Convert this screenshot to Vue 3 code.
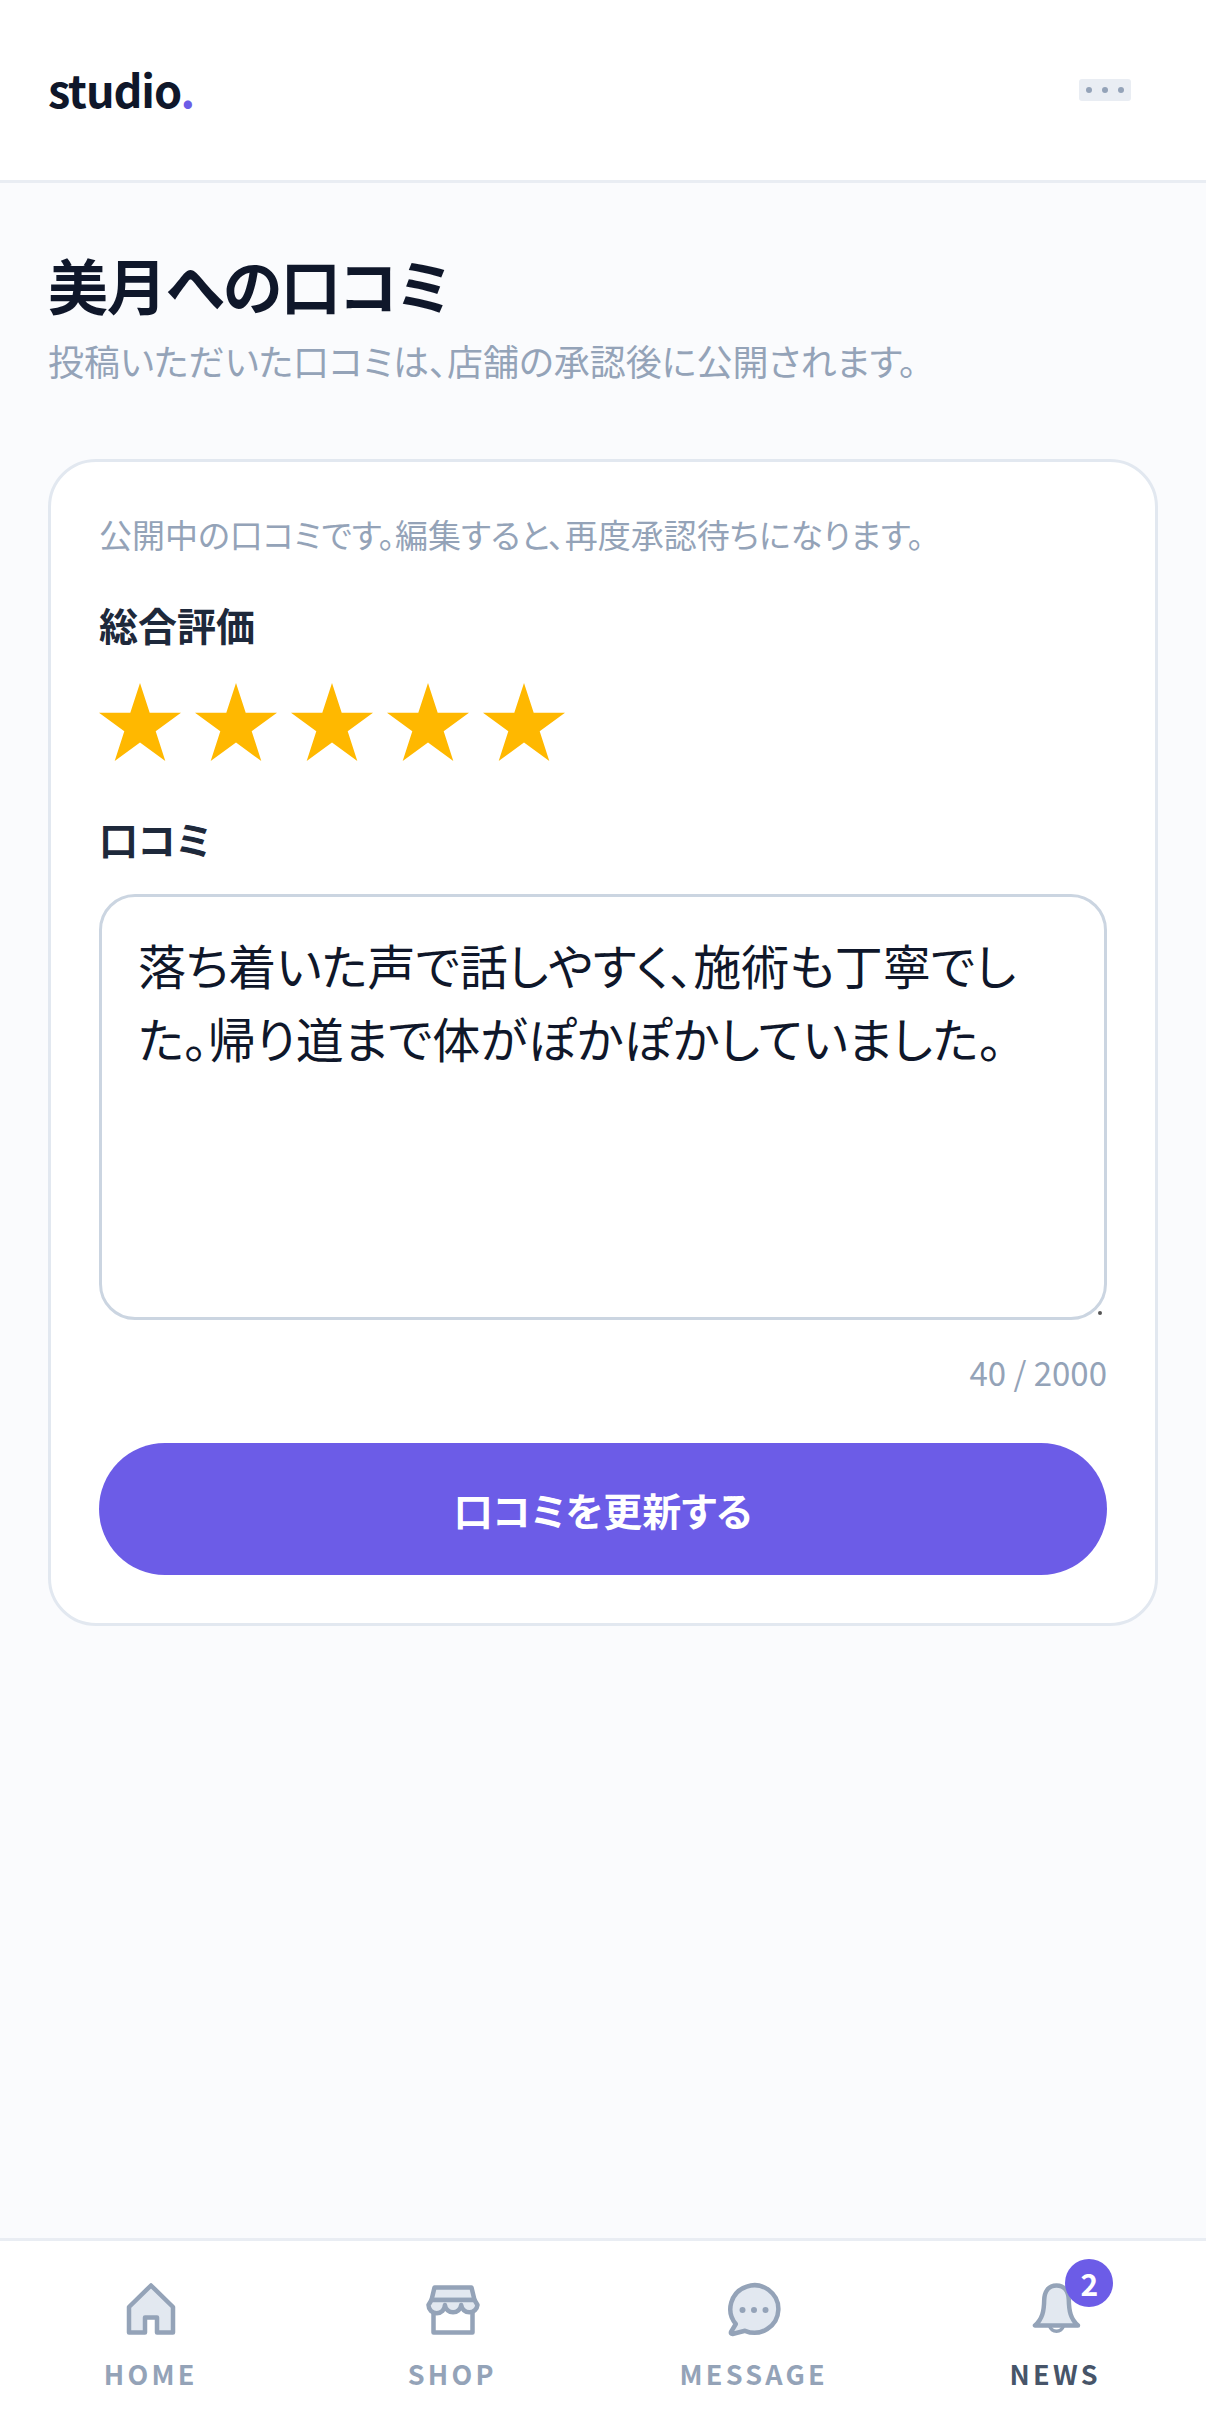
<template>
  <div class="page">
    <header class="top-bar">
      <div class="logo">studio<span class="logo-dot">.</span></div>
      <button class="menu-btn" type="button" aria-label="menu">
        <span class="menu-dot"></span>
        <span class="menu-dot"></span>
        <span class="menu-dot"></span>
      </button>
    </header>

    <main class="content">
      <h1 class="title">美月への口コミ</h1>
      <p class="subtitle">投稿いただいた口コミは、店舗の承認後に公開されます。</p>

      <section class="card">
        <p class="notice">公開中の口コミです。編集すると、再度承認待ちになります。</p>

        <div class="field-label">総合評価</div>
        <div class="stars">
          <svg v-for="n in 5" :key="n" class="star" viewBox="0 0 82 78">
            <polygon points="41,0 50.7,29.8 82,29.8 56.7,48.2 66.3,78 41,59.6 15.7,78 25.3,48.2 0,29.8 31.3,29.8" />
          </svg>
        </div>

        <div class="field-label review-label">口コミ</div>
        <div class="review-wrap">
          <textarea v-model="review" class="review-input"></textarea>
          <span class="resize-dot"></span>
        </div>
        <div class="counter">{{ review.length }} / 2000</div>

        <button class="submit-btn" type="button">口コミを更新する</button>
      </section>
    </main>

    <nav class="bottom-nav">
      <a class="nav-item">
        <svg class="nav-icon" viewBox="0 0 60 60">
          <path d="M30 6.5 L52 28 V53.5 H36 V38.5 H24 V53.5 H8 V28 Z" />
        </svg>
        <span class="nav-label">HOME</span>
      </a>
      <a class="nav-item">
        <svg class="nav-icon" viewBox="0 0 60 60">
          <path d="M11.5 31 V53.5 H50.5 V31" class="plain" />
          <path d="M12.5 8.5 H49.5 L52.5 21 H9.5 Z" />
          <path d="M6.5 26 L9.5 21 H52.5 L55.5 26 a8.2 8.2 0 0 1 -16.3 0 a8.2 8.2 0 0 1 -16.3 0 a8.2 8.2 0 0 1 -16.4 0 Z" />
        </svg>
        <span class="nav-label">SHOP</span>
      </a>
      <a class="nav-item">
        <svg class="nav-icon" viewBox="0 0 60 60">
          <path d="M11.8 45 A24 23.7 0 1 1 21 51.8 L8.5 55 Q6.5 55 7 53 Z" />
          <circle class="dot" cx="18.5" cy="31" r="3" />
          <circle class="dot" cx="30" cy="31" r="3" />
          <circle class="dot" cx="41.5" cy="31" r="3" />
        </svg>
        <span class="nav-label">MESSAGE</span>
      </a>
      <a class="nav-item active">
        <span class="bell-wrap">
          <svg class="nav-icon" viewBox="0 0 60 60">
            <path d="M24.5 47 a7.5 8 0 0 0 14 0" class="clapper" />
            <path d="M31.5 6.5 C23 6.5 19.5 13 19.2 21 C19 32 17.5 40 10 46.5 H53 C45.5 40 44 32 43.8 21 C43.5 13 40 6.5 31.5 6.5 Z" />
          </svg>
          <span class="badge">2</span>
        </span>
        <span class="nav-label">NEWS</span>
      </a>
    </nav>
  </div>
</template>

<script setup>
import { ref } from 'vue'

const review = ref('落ち着いた声で話しやすく、施術も丁寧でした。帰り道まで体がぽかぽかしていました。')
</script>

<style>
html,
body {
  margin: 0;
  background: #f8fafc;
}
</style>

<style scoped>
.page {
  display: flex;
  flex-direction: column;
  min-height: 2432px;
  background: #fafbfd;
  color: #0f172a;
  font-family: "Noto Sans CJK JP", "Noto Sans", sans-serif;
  font-feature-settings: "palt";
}

.top-bar {
  display: flex;
  align-items: center;
  justify-content: space-between;
  box-sizing: border-box;
  height: 183px;
  padding: 0 75px 0 48px;
  background: #fff;
  border-bottom: 3px solid #e9edf3;
}

.logo {
  margin-top: -4px;
  font-size: 45px;
  font-weight: 700;
  letter-spacing: -0.025em;
  line-height: 1;
}

.logo-dot {
  color: #6c5ce7;
}

.menu-btn {
  display: flex;
  align-items: center;
  justify-content: center;
  gap: 10px;
  width: 52px;
  height: 22px;
  padding: 0;
  background: #e9edf3;
  border: 0;
  border-radius: 3px;
}

.menu-dot {
  width: 6px;
  height: 6px;
  background: #94a3b8;
  border-radius: 50%;
}

.content {
  flex: 1;
  padding: 56px 48px 0;
}

.title {
  margin: 0;
  font-size: 60px;
  font-weight: 700;
  letter-spacing: -0.02em;
  line-height: 90px;
}

.subtitle {
  margin: 4px 0 72px;
  color: #94a3b8;
  font-size: 36px;
  line-height: 54px;
}

.card {
  display: flex;
  flex-direction: column;
  padding: 48px;
  background: #fff;
  border: 3px solid #e2e8f0;
  border-radius: 48px;
}

.notice {
  margin: 0 0 39px;
  color: #94a3b8;
  font-size: 33px;
  line-height: 48px;
}

.field-label {
  color: #1e293b;
  font-size: 39px;
  font-weight: 700;
  line-height: 54px;
}

.stars {
  display: flex;
  gap: 14px;
  margin: 32px 0 50px;
}

.star {
  width: 82px;
  height: 78px;
  fill: #ffb800;
}

.review-label {
  margin-bottom: 29px;
}

.review-wrap {
  position: relative;
}

.review-input {
  display: block;
  box-sizing: border-box;
  width: 100%;
  height: 426px;
  padding: 31px 36px;
  color: #0f172a;
  background: #fff;
  border: 3px solid #cbd5e1;
  border-radius: 36px;
  outline: 0;
  resize: none;
  font: inherit;
  font-size: 48px;
  line-height: 73px;
}

.resize-dot {
  position: absolute;
  right: 5px;
  bottom: 5px;
  width: 4px;
  height: 4px;
  background: #555;
  border-radius: 50%;
}

.counter {
  margin: 28px 0 47px;
  color: #94a3b8;
  font-size: 33px;
  line-height: 48px;
  text-align: right;
}

.submit-btn {
  height: 132px;
  padding: 0;
  color: #fff;
  background: #6c5ce7;
  border: 0;
  border-radius: 66px;
  font: inherit;
  font-size: 39px;
  font-weight: 700;
}

.bottom-nav {
  display: grid;
  grid-template-columns: repeat(4, 1fr);
  box-sizing: border-box;
  height: 194px;
  padding-top: 38px;
  background: #fff;
  border-top: 3px solid #e9edf3;
}

.nav-item {
  display: flex;
  flex-direction: column;
  align-items: center;
  color: #94a3b8;
}

.nav-item.active {
  color: #475569;
}

.nav-icon {
  display: block;
  width: 60px;
  height: 60px;
  overflow: visible;
  fill: #e2e8f0;
  stroke: #94a3b8;
  stroke-width: 4.5;
  stroke-linejoin: round;
  stroke-linecap: round;
}

.nav-icon .plain {
  fill: #fff;
}

.nav-icon .dot {
  fill: #94a3b8;
  stroke: none;
}

.nav-icon .clapper {
  fill: #fff;
  stroke-width: 3.5;
}

.bell-wrap {
  position: relative;
  display: block;
}

.badge {
  position: absolute;
  top: -20px;
  left: 40px;
  width: 48px;
  height: 48px;
  color: #fff;
  background: #6c5ce7;
  border-radius: 50%;
  font-size: 30px;
  font-weight: 700;
  line-height: 48px;
  text-align: center;
}

.nav-label {
  margin-top: 15px;
  font-size: 27px;
  font-weight: 700;
  letter-spacing: 0.12em;
  line-height: 40px;
}
</style>
